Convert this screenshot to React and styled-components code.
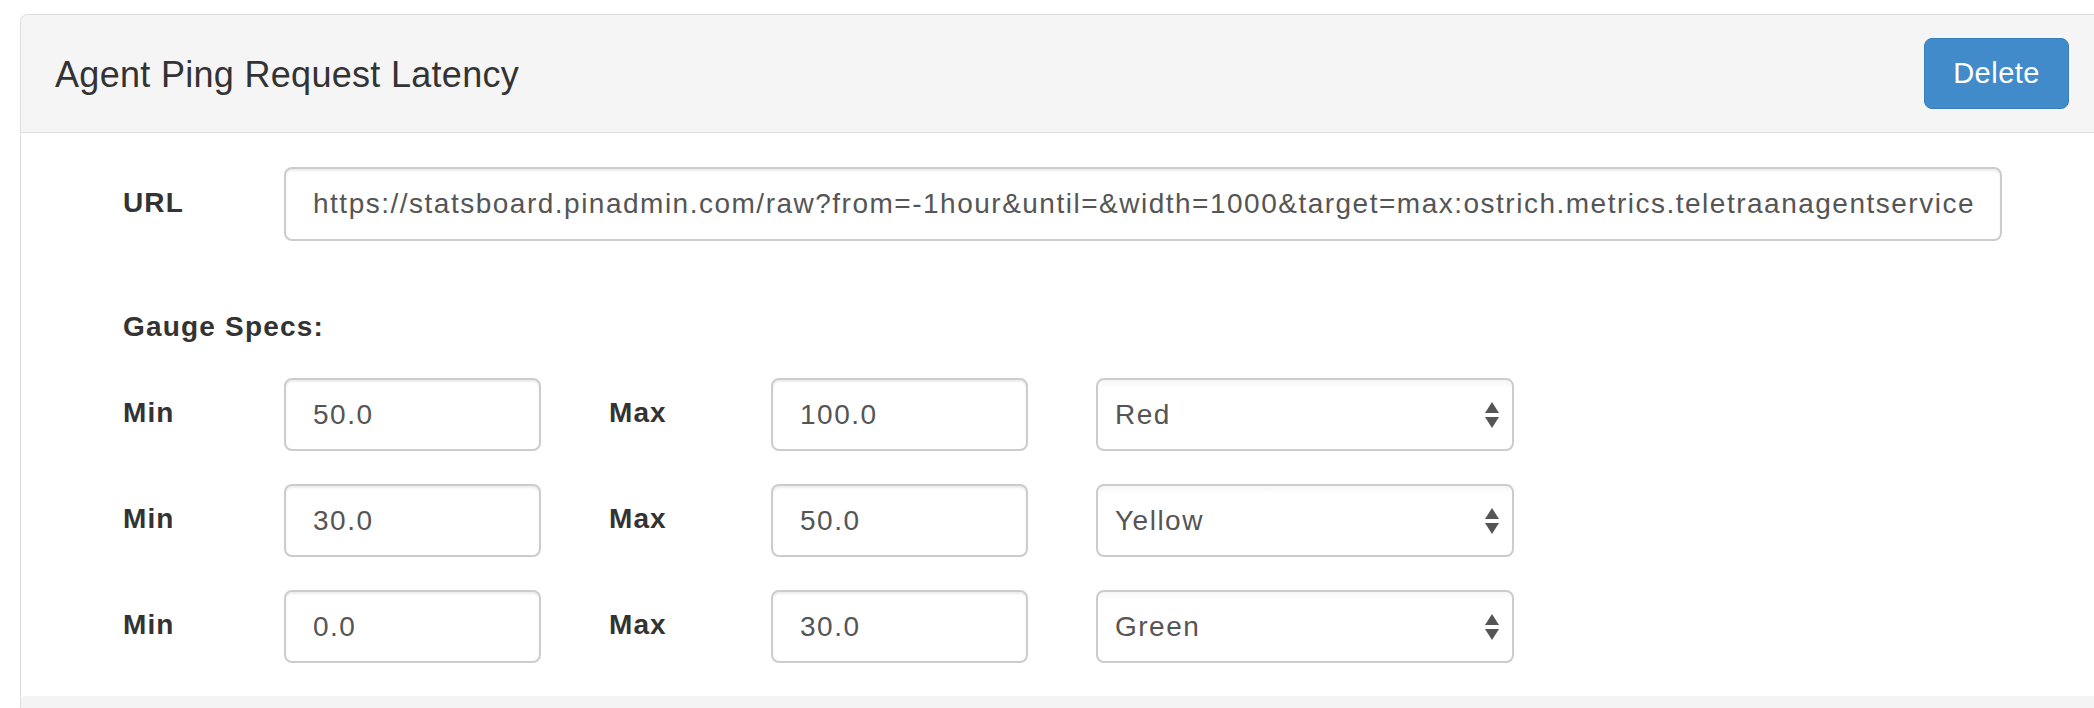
import React from "react";
import styled, { createGlobalStyle } from "styled-components";

const GlobalStyle = createGlobalStyle`
  html, body {
    margin: 0;
    padding: 0;
    background: #ffffff;
    overflow: hidden;
  }
  body {
    font-family: "Liberation Sans", Arial, Helvetica, sans-serif;
    color: #333333;
  }
  * { box-sizing: border-box; }
`;

const Page = styled.div`
  padding: 14px 0 0 20px;
  width: 2094px;
  height: 708px;
  overflow: hidden;
`;

const Panel = styled.section`
  width: 2084px;
  border: 1px solid #dddddd;
  border-bottom: none;
  border-radius: 8px 8px 0 0;
  background: #ffffff;
`;

const PanelHeader = styled.header`
  height: 118px;
  display: flex;
  align-items: center;
  justify-content: space-between;
  padding: 0 34px;
  background: #f5f5f5;
  border-bottom: 1px solid #dddddd;
  border-radius: 7px 7px 0 0;
`;

const PanelTitle = styled.h3`
  margin: 0;
  font-size: 36px;
  font-weight: 400;
  letter-spacing: 0.3px;
  color: #333333;
  line-height: 1.1;
  padding-top: 2px;
`;

const DeleteButton = styled.button`
  height: 71px;
  padding: 0 28px;
  font-family: inherit;
  font-size: 29px;
  letter-spacing: 0.5px;
  color: #ffffff;
  background: #428bca;
  border: 1px solid #357ebd;
  border-radius: 8px;
  cursor: pointer;
`;

const PanelBody = styled.div`
  padding: 34px 0 33px 102px;
`;

const UrlRow = styled.div`
  display: grid;
  grid-template-columns: 161px 1718px;
  align-items: center;
`;

const FieldLabel = styled.label`
  font-size: 28px;
  font-weight: 700;
  letter-spacing: 1.1px;
  color: #333333;
  padding-bottom: 3px;
`;

const TextInput = styled.input`
  width: 100%;
  height: ${(p) => p.$h || 73}px;
  padding: 0 27px;
  font-family: inherit;
  font-size: 28px;
  letter-spacing: 1.5px;
  color: #555555;
  background: #ffffff;
  border: 2px solid #cccccc;
  border-radius: 8px;
  box-shadow: inset 0 2px 2px rgba(0, 0, 0, 0.075);
  outline: none;
  text-overflow: clip;
`;

const SectionHeading = styled.h4`
  margin: 66px 0 31px 0;
  font-size: 28px;
  font-weight: 700;
  letter-spacing: 1.2px;
  line-height: 40px;
  color: #333333;
`;

const SpecList = styled.div`
  display: flex;
  flex-direction: column;
  gap: 33px;
`;

const SpecRow = styled.div`
  display: flex;
  align-items: center;
  gap: 68px;
`;

const FieldGroup = styled.div`
  display: grid;
  grid-template-columns: ${(p) => p.$labelWidth}px 257px;
  align-items: center;
`;

const SelectWrap = styled.div`
  position: relative;
  width: 418px;
  height: 73px;
`;

const Select = styled.select`
  appearance: none;
  -webkit-appearance: none;
  width: 100%;
  height: 100%;
  padding: 0 50px 0 17px;
  font-family: inherit;
  font-size: 28px;
  letter-spacing: 1.5px;
  color: #555555;
  background: linear-gradient(#f6f6f6 0px, #ffffff 8px, #ffffff 100%);
  border: 2px solid #cccccc;
  border-radius: 8px;
  outline: none;
`;

const SelectArrows = styled.svg`
  position: absolute;
  right: 14px;
  top: 50%;
  transform: translateY(-50%);
  pointer-events: none;
`;

const PanelFooter = styled.div`
  height: 40px;
  background: #f4f4f4;
  border-radius: 4px 0 0 0;
`;

const specs = [
  { min: "50.0", max: "100.0", color: "Red" },
  { min: "30.0", max: "50.0", color: "Yellow" },
  { min: "0.0", max: "30.0", color: "Green" },
];

const url =
  "https://statsboard.pinadmin.com/raw?from=-1hour&until=&width=1000&target=max:ostrich.metrics.teletraanagentservice.ping.latency";

export default function App() {
  return (
    <>
      <GlobalStyle />
      <Page>
        <Panel>
          <PanelHeader>
            <PanelTitle>Agent Ping Request Latency</PanelTitle>
            <DeleteButton type="button">Delete</DeleteButton>
          </PanelHeader>
          <PanelBody>
            <UrlRow>
              <FieldLabel>URL</FieldLabel>
              <TextInput $h={74} defaultValue={url} />
            </UrlRow>
            <SectionHeading>Gauge Specs:</SectionHeading>
            <SpecList>
              {specs.map((s, i) => (
                <SpecRow key={i}>
                  <FieldGroup $labelWidth={161}>
                    <FieldLabel>Min</FieldLabel>
                    <TextInput defaultValue={s.min} />
                  </FieldGroup>
                  <FieldGroup $labelWidth={162}>
                    <FieldLabel>Max</FieldLabel>
                    <TextInput defaultValue={s.max} />
                  </FieldGroup>
                  <SelectWrap>
                    <Select defaultValue={s.color}>
                      <option>Red</option>
                      <option>Yellow</option>
                      <option>Green</option>
                    </Select>
                    <SelectArrows width="16" height="26" viewBox="0 0 16 26">
                      <polygon points="8,0 15,11 1,11" fill="#555555" />
                      <polygon points="1,15 15,15 8,26" fill="#555555" />
                    </SelectArrows>
                  </SelectWrap>
                </SpecRow>
              ))}
            </SpecList>
          </PanelBody>
          <PanelFooter />
        </Panel>
      </Page>
    </>
  );
}
